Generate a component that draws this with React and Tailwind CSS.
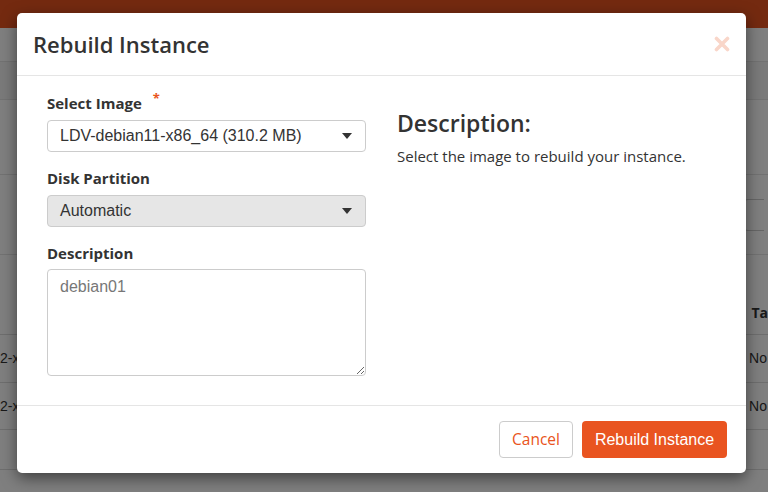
import React from 'react';

const ubuntu = { fontFamily: '"Open Sans", "Noto Sans", sans-serif' };
const arial = { fontFamily: '"Liberation Sans", Arial, sans-serif' };

const Caret = () => (
  <svg width="10" height="6" viewBox="0 0 10 6" className="shrink-0">
    <path d="M0 0h10L5 6z" fill="#333" />
  </svg>
);

const CloseIcon = () => (
  <svg width="16" height="16" viewBox="0 0 16 16">
    <path d="M2.5 2.5l11 11M13.5 2.5l-11 11" stroke="#f9d6c9" strokeWidth="3.6" strokeLinecap="round" />
  </svg>
);

const Background = () => (
  <div className="flex h-[492px] w-[768px] flex-col bg-white text-[14px] text-[#333]" style={ubuntu}>
    <div className="h-[28px] bg-[#e95420]" />
    <div className="h-[34px] border-b border-[#e5e5e5]" />
    <div className="h-[38px] border-b border-[#e5e5e5] bg-[#f5f5f5]" />
    <div className="h-[75px] border-b border-[#e5e5e5]" />
    <div className="flex h-[80px] items-center justify-end border-b border-[#e5e5e5] pr-[4px]">
      <div className="h-[32px] w-[20px] rounded-l-[4px] border border-r-0 border-[#ccc]" />
    </div>
    <div className="flex h-[80px] items-end justify-end border-b border-[#ddd] pb-[11px]">
      <span className="font-bold">Ta</span>
    </div>
    <div className="flex h-[48px] items-center justify-between border-b border-[#ddd]" style={arial}>
      <span>2-x</span>
      <span className="pr-[1px]">No</span>
    </div>
    <div className="flex h-[47px] items-center justify-between border-b border-[#ddd]" style={arial}>
      <span>2-x</span>
      <span className="pr-[1px]">No</span>
    </div>
    <div className="h-[40px] border-b border-[#ddd]" />
  </div>
);

export default function App() {
  return (
    <div className="relative h-[492px] w-[768px] overflow-hidden">
      <Background />
      <div className="absolute inset-0 bg-black/50" />
      <div
        className="absolute left-[17px] top-[13px] flex h-[460px] w-[729px] flex-col rounded-[5px] bg-white text-[#333] shadow-[0_5px_15px_rgba(0,0,0,0.5)]"
        style={ubuntu}
      >
        <div className="flex h-[63px] items-center justify-between border-b border-[#e5e5e5] pl-[16px] pr-[16px]">
          <h4 className="text-[22px] font-semibold leading-none">Rebuild Instance</h4>
          <CloseIcon />
        </div>

        <div className="flex flex-1 gap-[31px] px-[30px] pt-[17px]">
          <div className="flex w-[319px] flex-col">
            <label className="flex text-[15px] font-bold leading-[20px]">
              Select Image
              <span className="ml-[11px] mt-[-5px] text-[13px] text-[#e95420]">*</span>
            </label>
            <div
              className="mt-[7px] flex h-[32px] items-center justify-between rounded-[4px] border border-[#ccc] pl-[12px] pr-[13px] text-[16px] text-[#333]"
              style={arial}
            >
              <span>LDV-debian11-x86_64 (310.2 MB)</span>
              <Caret />
            </div>

            <label className="mt-[16px] text-[15px] font-bold leading-[20px]">Disk Partition</label>
            <div
              className="mt-[7px] flex h-[32px] items-center justify-between rounded-[4px] border border-[#ccc] bg-[#e6e6e6] pl-[12px] pr-[13px] text-[16px] text-[#333]"
              style={arial}
            >
              <span>Automatic</span>
              <Caret />
            </div>

            <label className="mt-[16px] text-[15px] font-bold leading-[20px]">Description</label>
            <textarea
              readOnly
              value="debian01"
              className="mt-[6px] h-[107px] resize-y rounded-[4px] border border-[#ccc] px-[12px] py-[6px] text-[16px] leading-[22px] text-[#777] outline-none"
              style={arial}
            />
          </div>

          <div className="flex flex-col pt-[16px]">
            <h3 className="text-[23px] font-semibold leading-[28px]">Description:</h3>
            <p className="mt-[9px] text-[15px] leading-[20px]">Select the image to rebuild your instance.</p>
          </div>
        </div>

        <div className="flex h-[68px] items-center justify-end gap-[9px] border-t border-[#e5e5e5] pr-[19px]">
          <button className="h-[37px] w-[74px] rounded-[4px] border border-[#ccc] bg-white text-[15.5px] text-[#e95420]">
            Cancel
          </button>
          <button className="h-[37px] w-[145px] rounded-[4px] bg-[#e95420] text-[16px] text-white" style={arial}>
            Rebuild Instance
          </button>
        </div>
      </div>
    </div>
  );
}
